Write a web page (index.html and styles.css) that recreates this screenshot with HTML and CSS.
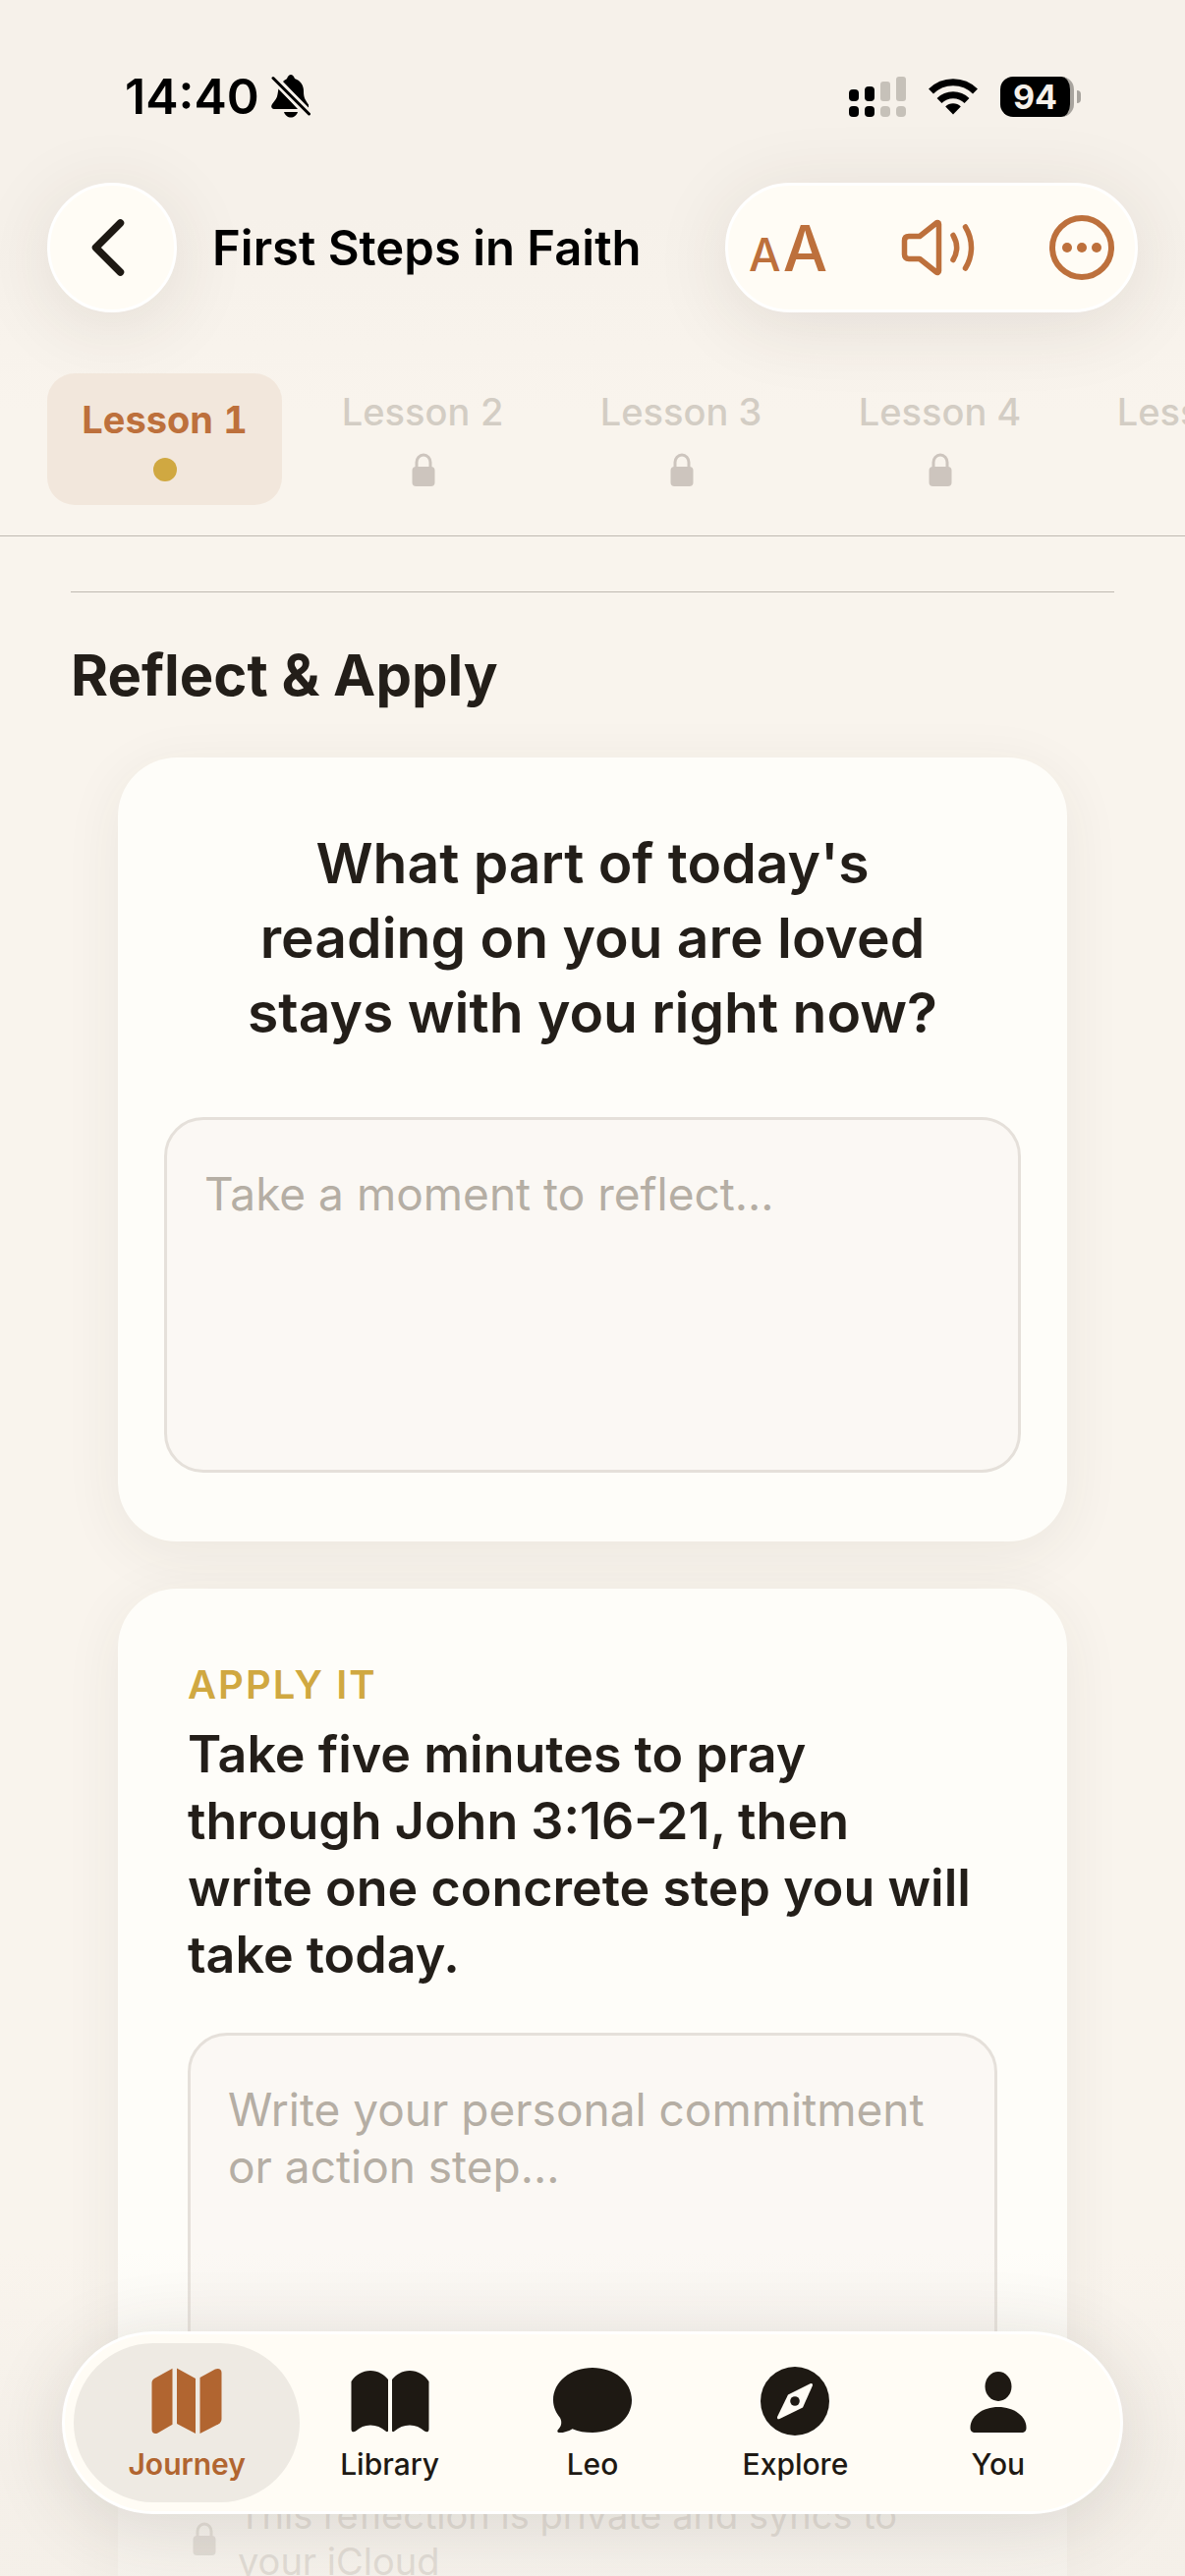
FILE: index.html
```html
<!DOCTYPE html>
<html lang="en">

<head>
  <meta charset="UTF-8">
  <meta name="viewport" content="width=device-width, initial-scale=1.0">
  <title>First Steps in Faith</title>
  <link rel="stylesheet" href="styles.css">
</head>

<body>
  <svg class="sprite" aria-hidden="true">
    <symbol id="lock" viewBox="0 0 24 34">
      <path d="M5 16V9.500a7 7.500 0 0 1 14 0V16" fill="none" stroke="currentColor" stroke-width="3"/>
      <rect x="0.500" y="14" width="23" height="20" rx="4" fill="currentColor"/>
    </symbol>
  </svg>

  <div class="app">
    <div class="status-bar">
      <div class="status-left">
        <span class="time">14:40</span>
        <svg width="40" height="44" viewBox="0 0 40 44" aria-hidden="true">
          <path d="M12 7c1.500-1.500 3-2 4-3 1-2.500 2.500-4 4-4s3 1.500 4 4c6 2 9 7 9 13 0 7 2 9 5 13.500V34Z"/>
          <path d="M7.500 14 27 35H3c-3 0-3.500-3-2-5 3-4 5-6 5.500-10Z"/>
          <path d="M13 38h14c-1 3.500-4 5.500-7 5.500S14 41.500 13 38Z"/>
          <path d="M2 3.500 38.500 40" fill="none" stroke="#f6f1ea" stroke-width="8"/>
          <path d="M2 3.500 38.500 40" fill="none" stroke="#000" stroke-width="3" stroke-linecap="round"/>
        </svg>
      </div>
      <div class="status-right">
        <svg width="58" height="41" viewBox="0 0 58 41" aria-hidden="true">
          <rect x="0" y="13" width="10" height="12" rx="4"/>
          <rect x="16" y="10" width="10" height="15" rx="4"/>
          <rect x="0" y="30" width="10" height="11" rx="4"/>
          <rect x="16" y="30" width="10" height="11" rx="4"/>
          <g fill="#c6c1b9">
            <rect x="32" y="5" width="10" height="20" rx="3"/>
            <rect x="48" y="0" width="10" height="25" rx="3"/>
            <rect x="32" y="30" width="10" height="11" rx="4"/>
            <rect x="48" y="30" width="10" height="11" rx="4"/>
          </g>
        </svg>
        <svg width="52" height="38" viewBox="0 0 52 38" aria-hidden="true">
          <path d="M3.500 14a32 32 0 0 1 45 0" fill="none" stroke="#000" stroke-width="7"/>
          <path d="M12 23.500a20 20 0 0 1 28 0" fill="none" stroke="#000" stroke-width="7"/>
          <path d="M26 37.500 18.200 29.500a11 11 0 0 1 15.600 0Z"/>
        </svg>
        <div class="battery"><span class="battery-level">94</span></div>
      </div>
    </div>

    <header class="top-bar">
      <button class="back-button" aria-label="Back">
        <svg width="34" height="58" viewBox="0 0 34 58" aria-hidden="true">
          <path d="M29.500 4 4.500 29l25 25" fill="none" stroke="currentColor" stroke-width="7.500" stroke-linecap="round" stroke-linejoin="round"/>
        </svg>
      </button>
      <h1 class="title">First Steps in Faith</h1>
      <div class="tools">
        <button class="tool" aria-label="Text size"><span class="small-a">A</span><span class="big-a">A</span></button>
        <button class="tool" aria-label="Listen">
          <svg width="76" height="60" viewBox="0 0 76 60" fill="none" stroke="currentColor" stroke-width="5.500" stroke-linecap="round" stroke-linejoin="round" aria-hidden="true">
            <path d="M8 18.500h11L36 5c1-1 2.500-.5 2.500 1.200v47.600c0 1.700-1.500 2.200-2.500 1.200L19 41.500H8c-3 0-4.500-1.500-4.500-4.500V23c0-3 1.500-4.500 4.500-4.500Z"/>
            <path d="M53 17.500c4.700 8 4.700 17 0 25"/>
            <path d="M65.500 9c8 13 8 29 0 42"/>
          </svg>
        </button>
        <button class="tool" aria-label="More">
          <svg width="66" height="66" viewBox="0 0 66 66" aria-hidden="true">
            <circle cx="33" cy="33" r="30" fill="none" stroke="currentColor" stroke-width="6"/>
            <circle cx="18" cy="33" r="5" fill="currentColor"/>
            <circle cx="33" cy="33" r="5" fill="currentColor"/>
            <circle cx="48" cy="33" r="5" fill="currentColor"/>
          </svg>
        </button>
      </div>
    </header>

    <div class="lessons">
      <button class="lesson active">Lesson 1<span class="dot"></span></button>
      <button class="lesson">Lesson 2<svg class="lesson-lock" aria-hidden="true"><use href="#lock"/></svg></button>
      <button class="lesson">Lesson 3<svg class="lesson-lock" aria-hidden="true"><use href="#lock"/></svg></button>
      <button class="lesson">Lesson 4<svg class="lesson-lock" aria-hidden="true"><use href="#lock"/></svg></button>
      <button class="lesson">Lesson 5<svg class="lesson-lock" aria-hidden="true"><use href="#lock"/></svg></button>
    </div>

    <main class="content">
      <hr class="divider">
      <h2 class="section-title">Reflect &amp; Apply</h2>

      <section class="card reflect">
        <label class="question" for="reflection">What part of today's reading on you are loved stays with you right now?</label>
        <textarea class="field" id="reflection" placeholder="Take a moment to reflect..."></textarea>
      </section>

      <section class="card apply">
        <h3 class="eyebrow">APPLY IT</h3>
        <label class="prompt" for="commitment">Take five minutes to pray through John 3:16-21, then write one concrete step you will take today.</label>
        <textarea class="field tall" id="commitment" placeholder="Write your personal commitment or action step..."></textarea>
        <div class="note">
          <svg class="note-lock" aria-hidden="true"><use href="#lock"/></svg>
          <p>This reflection is private and syncs to your iCloud</p>
        </div>
      </section>
    </main>

    <div class="fade"></div>

    <nav class="tab-bar">
      <a class="tab current" href="#journey">
        <svg width="72" height="68" viewBox="0 0 72 68" aria-hidden="true">
          <path d="M0.500 16c0-2.500.8-3.700 2.500-5L21.500.8v57L6.500 66.500C3.500 68 .5 66.500.5 63Z"/>
          <path d="M26 .5 45 11v56L26 57Z"/>
          <path d="M49.500 10 65 1.500c3.500-1.500 6.500 0 6.500 3.500v47c0 2.500-1 4-3 5.200L49.500 67Z"/>
        </svg>
        <span>Journey</span>
      </a>
      <a class="tab" href="#library">
        <svg width="80" height="68" viewBox="0 0 80 68" aria-hidden="true">
          <path d="M.5 14C5 7 12 3 20 3s14 4 18 9v52c0 1.500-1.500 1.500-2.500.5C31 60.500 26 58.500 20 58.500S9.500 60.500 5 64.500C3 66 .5 65.500.5 62.500Z"/>
          <path d="M79.500 14C75 7 68 3 60 3s-14 4-18 9v52c0 1.500 1.500 1.500 2.500.5 4.500-4 9.500-6 15.500-6s10.500 2 15 6c2 1.500 4.500 1 4.500-2Z"/>
        </svg>
        <span>Library</span>
      </a>
      <a class="tab" href="#leo">
        <svg width="80" height="68" viewBox="0 0 80 68" aria-hidden="true">
          <path d="M40 0C62 0 80 14 80 33S62 66 40 66c-8 0-14-1-20.500-3.800C15 65 9 66.500 5.500 66 4 65.500 4 64 5 63c3-3 4.500-7 2-12C3 46 0 40 0 33 0 14 18 0 40 0Z"/>
        </svg>
        <span>Leo</span>
      </a>
      <a class="tab" href="#explore">
        <svg width="70" height="70" viewBox="0 0 70 70" aria-hidden="true">
          <circle cx="35" cy="35" r="35"/>
          <path d="M28 28.500 50.500 17.200c2-.8 3 .3 2.300 2.300L43 41.500 19.500 53c-2 .8-3-.3-2.300-2.300Z" fill="#fffcf5"/>
          <circle cx="35" cy="35" r="4.800"/>
        </svg>
        <span>Explore</span>
      </a>
      <a class="tab" href="#you">
        <svg width="58" height="68" viewBox="0 0 58 68" aria-hidden="true">
          <ellipse cx="29" cy="19" rx="13.500" ry="15"/>
          <path d="M29 40c16 0 28.500 9.500 28.500 21 0 3.500-1.500 5-5 5h-47c-3.500 0-5-1.500-5-5C.5 49.500 13 40 29 40Z"/>
        </svg>
        <span>You</span>
      </a>
    </nav>
  </div>
</body>

</html>
```

FILE: styles.css
```css
* {
  box-sizing: border-box;
}

body {
  margin: 0;
  font-family: Inter, "Liberation Sans", sans-serif;
  color: #231e19;
  background-color: #f9f4ed;
}

button {
  padding: 0;
  border: none;
  background: none;
  font-family: inherit;
  color: inherit;
  cursor: pointer;
}

h1,
h2,
h3,
p {
  margin: 0;
}

.sprite {
  position: absolute;
  width: 0;
  height: 0;
}

.app {
  position: relative;
  display: flex;
  flex-direction: column;
  height: 100vh;
  overflow: hidden;
  background: linear-gradient(#f6f1ea 220px, #f9f4ed 420px);
}

/* status bar */
.status-bar {
  display: flex;
  justify-content: space-between;
  align-items: center;
  flex-shrink: 0;
  height: 186px;
  padding: 10px 106px 0 127px;
  color: #000;
}

.status-left,
.status-right {
  display: flex;
  align-items: center;
}

.status-left {
  gap: 12px;
}

.status-right {
  gap: 22px;
}

.time {
  font-size: 50px;
  font-weight: 600;
}

.battery {
  display: flex;
  align-items: center;
}

.battery-level {
  width: 75px;
  height: 41px;
  border-right: 4px solid #a8a49e;
  border-radius: 13px;
  background-color: #000;
  color: #f6f1ea;
  font-size: 34px;
  font-weight: 700;
  line-height: 41px;
  text-align: center;
}

.battery::after {
  content: "";
  width: 4px;
  height: 13px;
  margin-left: 3px;
  border-radius: 0 4px 4px 0;
  background-color: #a8a49e;
}

/* header */
.top-bar {
  display: flex;
  align-items: center;
  flex-shrink: 0;
  padding: 0 48px;
}

.back-button,
.tools {
  height: 132px;
  border: 3px solid #fff;
  border-radius: 66px;
  background-color: #fffcf5;
  box-shadow: 0 12px 80px rgba(60, 50, 40, 0.11);
}

.back-button {
  display: flex;
  align-items: center;
  justify-content: center;
  width: 132px;
  padding-right: 8px;
  color: #1e1913;
}

.title {
  margin-left: 36px;
  color: #000;
  font-size: 49px;
  font-weight: 600;
  white-space: nowrap;
}

.tools {
  display: flex;
  align-items: center;
  justify-content: space-between;
  width: 420px;
  margin-left: auto;
  padding: 0 21px;
  color: #bd703c;
}

.tool {
  display: flex;
  align-items: baseline;
  gap: 2px;
}

.small-a,
.big-a {
  font-size: 46px;
  font-weight: 500;
}

.big-a {
  font-size: 64px;
}

/* lessons */
.lessons {
  display: flex;
  align-items: center;
  gap: 24px;
  flex-shrink: 0;
  padding: 54px 0 23px 48px;
  border-bottom: 1px solid #bfb9b1;
  overflow: hidden;
}

.lesson {
  display: flex;
  flex-direction: column;
  align-items: center;
  gap: 16px;
  flex-shrink: 0;
  min-width: 239px;
  padding: 24px;
  border-radius: 28px;
  color: #d3cdc4;
  font-size: 38px;
  font-weight: 500;
  font-variant-numeric: tabular-nums;
  line-height: 46px;
}

.lesson.active {
  background-color: #f2e7dc;
  color: #bd703c;
  font-weight: 700;
}

.dot {
  width: 24px;
  height: 24px;
  border-radius: 50%;
  background-color: #d0a841;
}

.lesson-lock {
  width: 24px;
  height: 40px;
  color: #cdc5be;
}

/* content */
.content {
  flex: 1;
  min-height: 0;
  padding: 56px 72px 0;
  overflow: hidden;
}

.divider {
  height: 1px;
  margin: 0;
  border: none;
  background-color: #bfb9b1;
}

.section-title {
  margin: 48px 0;
  font-size: 58px;
  font-weight: 700;
  line-height: 72px;
}

.card {
  display: flex;
  flex-direction: column;
  margin: 0 48px 48px;
  border-radius: 60px;
  background-color: #fefdf9;
  box-shadow: 0 12px 60px rgba(60, 50, 40, 0.07);
}

.reflect {
  padding: 70px 47px;
}

.apply {
  padding: 73px 71px;
}

.question {
  padding: 0 48px;
  margin-bottom: 68px;
  font-size: 57px;
  font-weight: 600;
  line-height: 76px;
  text-align: center;
}

.field {
  width: 100%;
  height: 362px;
  padding: 46px 38px;
  border: 3px solid #e5e0da;
  border-radius: 40px;
  background-color: #fbf8f4;
  color: #231e19;
  font-family: inherit;
  font-size: 46px;
  line-height: 58px;
  resize: none;
}

.field.tall {
  height: 418px;
}

.field::placeholder {
  color: #b5aea4;
}

.eyebrow {
  margin-bottom: 12px;
  color: #d0a841;
  font-size: 40px;
  font-weight: 600;
  line-height: 50px;
  letter-spacing: 2px;
}

.prompt {
  margin-bottom: 45px;
  padding-right: 16px;
  font-size: 52px;
  font-weight: 600;
  line-height: 68px;
}

.note {
  display: flex;
  align-items: center;
  gap: 22px;
  margin-top: 50px;
  padding: 0 48px 0 5px;
  color: #b9b3ab;
  font-size: 38px;
  line-height: 47px;
}

.note-lock {
  flex-shrink: 0;
  width: 24px;
  height: 34px;
}

/* bottom tabs float over the content */
.fade {
  position: absolute;
  right: 0;
  bottom: 0;
  left: 0;
  height: 330px;
  background: linear-gradient(rgba(243, 238, 231, 0), rgba(243, 238, 231, 0.7) 70%);
  pointer-events: none;
}

.tab-bar {
  position: absolute;
  right: 63px;
  bottom: 63px;
  left: 63px;
  display: flex;
  height: 186px;
  padding: 9px 21px;
  border: 3px solid #fff;
  border-radius: 93px;
  background-color: #fffcf5;
  box-shadow: 0 12px 80px rgba(60, 50, 40, 0.14);
}

.tab {
  display: flex;
  flex: 1;
  flex-direction: column;
  align-items: center;
  gap: 11px;
  margin: 0 -12px;
  padding-top: 24px;
  border-radius: 81px;
  color: #1e1913;
  font-size: 30px;
  font-weight: 500;
  line-height: 36px;
  text-decoration: none;
}

.tab svg {
  height: 70px;
}

.tab svg,
.status-left svg {
  fill: currentColor;
}

.tab.current {
  background-color: #eeeae3;
  color: #b16530;
  font-weight: 600;
}
```
